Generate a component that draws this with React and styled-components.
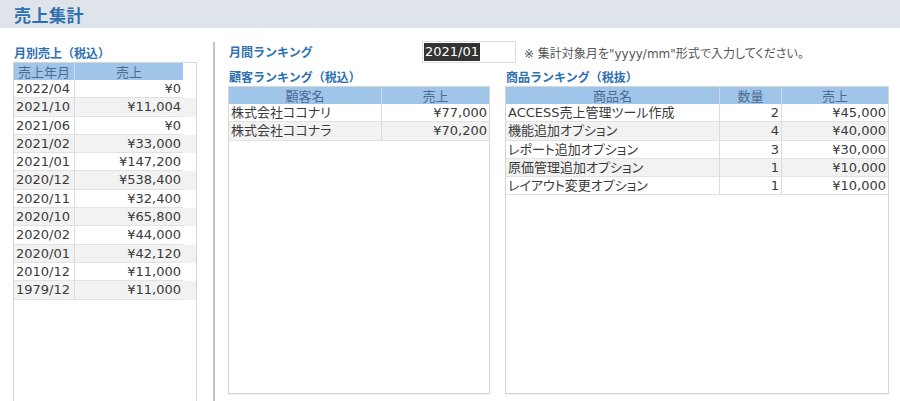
import React from "react";
import styled, { createGlobalStyle } from "styled-components";

const GlobalStyle = createGlobalStyle`
  html, body {
    margin: 0;
    padding: 0;
    background: #ffffff;
  }
  body {
    font-family: "DejaVu Sans", "Noto Sans CJK JP", sans-serif;
    color: #3a3a3a;
  }
`;

const Page = styled.div`
  width: 900px;
  height: 401px;
  overflow: hidden;
  background: #ffffff;
`;

const HeaderBar = styled.div`
  height: 28px;
  background: #dfe3ea;
  padding-left: 14px;
  display: flex;
  align-items: center;
`;

const PageTitle = styled.h1`
  margin: 0;
  font-family: "Noto Sans CJK JP", sans-serif;
  font-size: 17px;
  font-weight: 700;
  color: #2e70b0;
  letter-spacing: 0.5px;
`;

const Main = styled.div`
  display: flex;
  height: 373px;
  padding-left: 13px;
`;

const LeftCol = styled.div`
  width: 184px;
  padding-top: 16px;
  display: flex;
  flex-direction: column;
`;

const Divider = styled.div`
  width: 2px;
  background: #c4c4c4;
  margin: 14px 13px 0 16px;
`;

const RightArea = styled.div`
  width: 661px;
  padding-top: 13px;
  display: flex;
  flex-direction: column;
`;

const TopRow = styled.div`
  display: flex;
  align-items: center;
  height: 22px;
`;

const SectionTitle = styled.div`
  font-family: "Noto Sans CJK JP", sans-serif;
  font-size: 12px;
  font-weight: 700;
  color: #2e70b0;
  height: 18px;
  line-height: 18px;
  width: ${({ w }) => (w ? `${w}px` : "auto")};
  flex-shrink: 0;
  padding-left: 1px;
`;

const DateInput = styled.div`
  width: 91px;
  height: 20px;
  border: 1px solid #dcdcdc;
  background: #fff;
  display: flex;
  align-items: center;
  padding-left: 1px;
`;

const Selected = styled.span`
  background: #333333;
  color: #ffffff;
  font-size: 13px;
  line-height: 18px;
  padding: 0 1px;
`;

const Note = styled.div`
  margin-left: 8px;
  font-family: "DejaVu Sans", "Noto Sans CJK JP", sans-serif;
  font-feature-settings: "palt";
  font-size: 12px;
  color: #555555;
`;

const Panels = styled.div`
  display: flex;
  gap: 15px;
  margin-top: 5px;
`;

const Panel = styled.div`
  width: ${({ w }) => w}px;
  display: flex;
  flex-direction: column;
`;

const TableBox = styled.div`
  border: 1px solid #d6d6d6;
  border-bottom: ${({ open }) => (open ? "none" : "1px solid #d6d6d6")};
  background: #ffffff;
  height: ${({ h }) => (h ? `${h}px` : "auto")};
  flex: ${({ h }) => (h ? "none" : "1")};
  box-sizing: border-box;
  box-shadow: ${({ open }) => (open ? "none" : "0 1px 1px rgba(0,0,0,0.05)")};
`;

const Row = styled.div`
  display: grid;
  grid-template-columns: ${({ cols }) => cols};
  background: ${({ alt }) => (alt ? "#f2f2f2" : "#ffffff")};
`;

const HeadCell = styled.div`
  height: 17px;
  line-height: 17px;
  background: #9fc5e8;
  color: #4a6c92;
  text-align: center;
  font-family: "Noto Sans CJK JP", sans-serif;
  font-size: 13px;
  border-right: 1px solid #c3daf0;
  &:last-child {
    border-right: none;
  }
`;

const Cell = styled.div`
  height: 18.3px;
  line-height: 18px;
  box-sizing: border-box;
  padding: 0 2px;
  font-size: 13px;
  font-feature-settings: "palt";
  text-align: ${({ right }) => (right ? "right" : "left")};
  border-right: 1px solid #dcdcdc;
  border-bottom: 1px solid #e2e2e2;
  white-space: nowrap;
  overflow: hidden;
  &:last-child {
    border-right: none;
  }
`;

const monthly = [
  ["2022/04", "¥0"],
  ["2021/10", "¥11,004"],
  ["2021/06", "¥0"],
  ["2021/02", "¥33,000"],
  ["2021/01", "¥147,200"],
  ["2020/12", "¥538,400"],
  ["2020/11", "¥32,400"],
  ["2020/10", "¥65,800"],
  ["2020/02", "¥44,000"],
  ["2020/01", "¥42,120"],
  ["2010/12", "¥11,000"],
  ["1979/12", "¥11,000"],
];

const customers = [
  ["株式会社ココナリ", "¥77,000"],
  ["株式会社ココナラ", "¥70,200"],
];

const products = [
  ["ACCESS売上管理ツール作成", "2", "¥45,000"],
  ["機能追加オプション", "4", "¥40,000"],
  ["レポート追加オプション", "3", "¥30,000"],
  ["原価管理追加オプション", "1", "¥10,000"],
  ["レイアウト変更オプション", "1", "¥10,000"],
];

const DataTable = ({ cols, heads, rows, rightFrom, h, open }) => (
  <TableBox h={h} open={open}>
    <Row cols={cols}>
      {heads.map((hd) => (
        <HeadCell key={hd}>{hd}</HeadCell>
      ))}
    </Row>
    {rows.map((r, i) => (
      <Row key={i} cols={cols} alt={i % 2 === 1}>
        {r.map((v, j) => (
          <Cell key={j} right={j >= rightFrom}>
            {v}
          </Cell>
        ))}
      </Row>
    ))}
  </TableBox>
);

export default function App() {
  return (
    <Page>
      <GlobalStyle />
      <HeaderBar>
        <PageTitle>売上集計</PageTitle>
      </HeaderBar>
      <Main>
        <LeftCol>
          <SectionTitle>月別売上（税込）</SectionTitle>
          <DataTable
            open
            cols="61px 108px"
            heads={["売上年月", "売上"]}
            rows={monthly}
            rightFrom={1}
          />
        </LeftCol>
        <Divider />
        <RightArea>
          <TopRow>
            <SectionTitle w={193}>月間ランキング</SectionTitle>
            <DateInput>
              <Selected>2021/01</Selected>
            </DateInput>
            <Note>※ 集計対象月を"yyyy/mm"形式で入力してください。</Note>
          </TopRow>
          <Panels>
            <Panel w={262}>
              <SectionTitle>顧客ランキング（税込）</SectionTitle>
              <DataTable
                h={308}
                cols="153px 107px"
                heads={["顧客名", "売上"]}
                rows={customers}
                rightFrom={1}
              />
            </Panel>
            <Panel w={384}>
              <SectionTitle>商品ランキング（税抜）</SectionTitle>
              <DataTable
                h={308}
                cols="214px 62px 106px"
                heads={["商品名", "数量", "売上"]}
                rows={products}
                rightFrom={1}
              />
            </Panel>
          </Panels>
        </RightArea>
      </Main>
    </Page>
  );
}
